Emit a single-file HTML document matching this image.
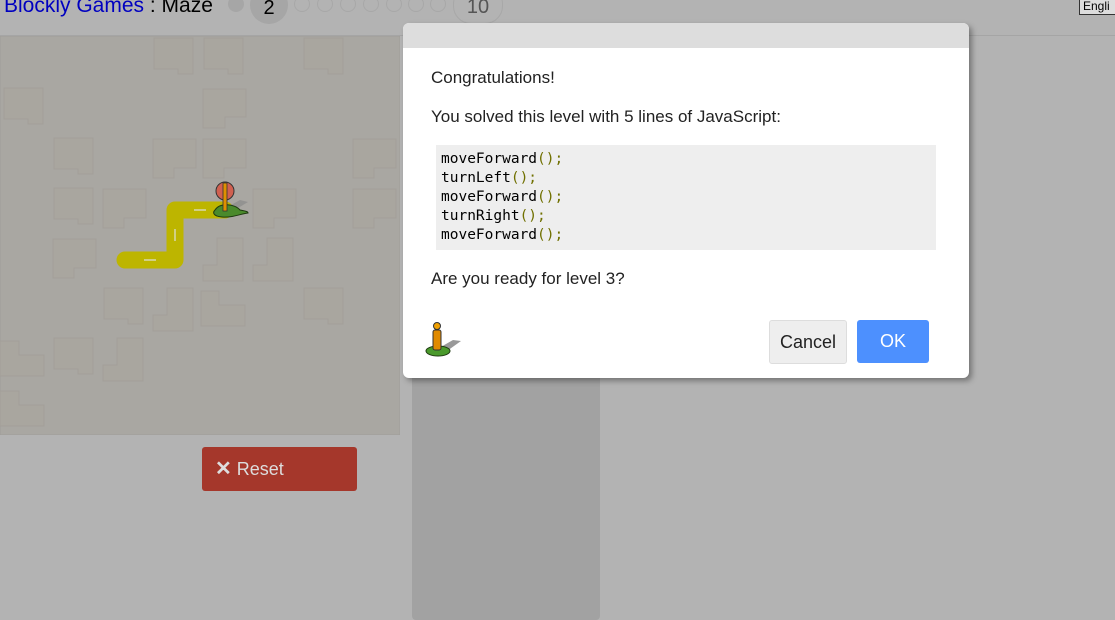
<!DOCTYPE html>
<html><head><style>
body{margin:0;width:1115px;height:620px;background:#b3b3b3;font-family:"Liberation Sans",sans-serif;position:relative;overflow:hidden}
.hdr{position:absolute;left:4px;top:-6px;font-size:21px;color:#000}
.hdr a{color:#0000c0;text-decoration:none}
.dot{position:absolute;top:-4px;width:16px;height:16px;border-radius:50%;border:1px solid #a8a8a8;box-sizing:border-box}
.line{position:absolute;left:0;right:0;top:35px;height:1px;background:#a5a5a5}
.col{position:absolute;left:412px;top:36px;width:188px;height:584px;background:#a2a2a2;border-radius:0 0 4px 4px}
.dlg{position:absolute;left:403px;top:23px;width:566px;height:355px;background:#fff;border-radius:6px;box-shadow:3px 3px 6px rgba(0,0,0,.35);overflow:hidden}
.dlg .top{height:25px;background:#dddddd}
.dlg p{margin:0;position:absolute;left:28px;font-size:17px;color:#222}
pre{position:absolute;left:33px;top:122px;width:500px;height:105px;margin:0;background:#eeeeee;font-family:"DejaVu Sans Mono","Liberation Mono",monospace;font-size:14.5px;line-height:19px;padding:5px 0 0 5px;box-sizing:border-box;color:#000}
pre span{color:#707000}
.btn{position:absolute;top:297px;height:42px;border-radius:3px;font-size:18px;text-align:center;line-height:42px}
</style></head><body>
<div class="hdr"><a>Blockly Games</a> : Maze</div>
<div class="dot" style="left:228px;background:#a6a6a6;border:none"></div>
<div style="position:absolute;left:250px;top:-14px;width:38px;height:38px;border-radius:50%;background:#a6a6a6;font-size:20px;text-align:center;line-height:44px">2</div>
<div class="dot" style="left:294px"></div><div class="dot" style="left:317px"></div><div class="dot" style="left:340px"></div><div class="dot" style="left:363px"></div><div class="dot" style="left:386px"></div><div class="dot" style="left:408px"></div><div class="dot" style="left:430px"></div>
<div style="position:absolute;left:453px;top:-14px;width:48px;height:36px;border-radius:18px;border:1px solid #a8a8a8;font-size:20px;color:#555;text-align:center;line-height:40px">10</div>
<div style="position:absolute;left:1079px;top:-2px;width:40px;height:15px;border:1px solid #333;background:#ddd;font-size:12px;line-height:14px;padding-left:3px">Engli</div>
<div class="line"></div>
<svg style="position:absolute;left:0;top:36px" width="400" height="399" viewBox="0 36 400 399">
<rect x="0" y="36" width="400" height="399" fill="#a9a7a2" stroke="#9f9d99"/>
<g fill="#a9a69f" stroke="#a29f99" stroke-width="1">
<path d="M154 38h39v36h-15v-5h-24z"/><path d="M204 38h39v36h-15v-5h-24z"/><path d="M304 38h39v36h-15v-5h-24z"/>
<path d="M4 88h39v36h-15v-5h-24z"/><path d="M203 89h43v28h-21v11h-22z"/>
<path d="M54 138h39v36h-15v-5h-24z"/><path d="M153 139h43v29h-22v10h-21z"/><path d="M203 139h43v29h-22v10h-21z"/><path d="M353 139h43v29h-22v10h-21z"/>
<path d="M54 188h39v36h-15v-5h-24z"/><path d="M103 189h43v29h-22v10h-21z"/><path d="M253 189h43v29h-22v10h-21z"/><path d="M353 189h43v29h-22v10h-21z"/>
<path d="M53 239h43v29h-22v10h-21z"/><path d="M217 238h26v43h-40v-16h14z"/><path d="M267 238h26v43h-40v-16h14z"/>
<path d="M104 288h39v36h-15v-5h-24z"/><path d="M167 288h26v43h-40v-16h14z"/><path d="M201 291h18v14h26v21h-44z"/><path d="M304 288h39v36h-15v-5h-24z"/>
<path d="M0 341h19v14h25v21h-44z"/><path d="M54 338h39v36h-15v-5h-24z"/><path d="M117 338h26v43h-40v-16h14z"/>
<path d="M0 391h19v14h25v21h-44z"/>
</g>
<path d="M125 260h50v-50h50" fill="none" stroke="#bdb500" stroke-width="17" stroke-linejoin="round" stroke-linecap="round"/>
<g stroke="#d8d8b0" stroke-width="1.5"><path d="M144 260h12M175 229v12M194 210h12"/></g>
<path d="M222 210l18 -10 8 2 -20 12z" fill="#8a8a8a" opacity=".7"/>
<path d="M215 210c5-8 20-6 25 0 4 1 8 1 8 3-8 1-16 5-26 4-10-1-9-5-7-7z" fill="#4a8a2c" stroke="#1e3a10"/>
<circle cx="225" cy="191" r="9" fill="#d06050" stroke="#333"/>
<rect x="223" y="183" width="4" height="28" fill="#e09000" stroke="#333" stroke-width=".8"/>
</svg>
<div style="position:absolute;left:202px;top:447px;width:155px;height:44px;background:#a5372b;border-radius:3px;color:#ddd;font-size:18px;line-height:44px"><span style="margin-left:13px;font-weight:bold;font-size:20px">✕</span> Reset</div>
<div class="col"></div>
<div class="dlg"><div class="top"></div>
<p style="top:45px">Congratulations!</p>
<p style="top:84px">You solved this level with 5 lines of JavaScript:</p>
<pre>moveForward<span>();</span>
turnLeft<span>();</span>
moveForward<span>();</span>
turnRight<span>();</span>
moveForward<span>();</span></pre>
<p style="top:246px">Are you ready for level 3?</p>
<svg style="position:absolute;left:22px;top:297px" width="36" height="40">
<path d="M14 28l14-8 8 1-14 10z" fill="#999"/>
<ellipse cx="13" cy="31" rx="12" ry="5" fill="#4a9a2c" stroke="#1e3a10"/>
<rect x="8" y="10" width="8" height="20" rx="2" fill="#e08a00" stroke="#333"/>
<circle cx="12" cy="6" r="3.5" fill="#f0a000" stroke="#333"/>
</svg>
<div class="btn" style="left:366px;width:76px;background:#eeeeee;border:1px solid #ddd;color:#222">Cancel</div>
<div class="btn" style="left:454px;width:72px;background:#4d90fe;color:#fff;top:297px;height:43px">OK</div>
</div>
</body></html>
